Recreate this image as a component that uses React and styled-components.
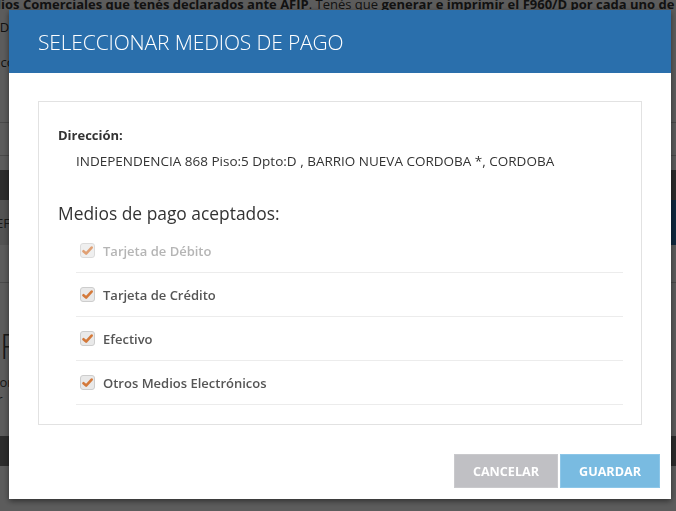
import React from "react";
import styled, { createGlobalStyle } from "styled-components";

const GlobalStyle = createGlobalStyle`
  html, body {
    margin: 0;
    padding: 0;
    background: #fff;
    font-family: "Open Sans", "Liberation Sans", sans-serif;
    color: #333;
    overflow: hidden;
  }
`;

const methods = [
  { id: "debito", label: "Tarjeta de Débito", disabled: true },
  { id: "credito", label: "Tarjeta de Crédito" },
  { id: "efectivo", label: "Efectivo" },
  { id: "otros", label: "Otros Medios Electrónicos" },
];

const Page = styled.div`
  width: 676px;
  height: 511px;
  overflow: hidden;
`;

const Intro = styled.p`
  margin: -7px 0 0 -48px;
  white-space: nowrap;
  font-size: 13px;
  line-height: 23px;
  color: #333;
  b {
    font-weight: 700;
  }
`;

const Note = styled.p`
  margin: 13px 0 0 -40px;
  font-size: 13px;
  line-height: 20px;
`;

const Rule = styled.div`
  margin-top: ${(p) => p.gap}px;
  border-top: 1px solid #ccc;
`;

const TableHead = styled.div`
  margin-top: 14px;
  height: 30px;
  background: #7a7a7a;
`;

const TableRow = styled.div`
  display: flex;
  height: 45px;
  align-items: center;
  background: #e6e6e6;
  font-size: 13px;
  color: #444;
  span {
    margin-left: -4px;
  }
  i {
    margin-left: auto;
    height: 100%;
    width: 12px;
    background: #2a6fac;
  }
`;

const BigTitle = styled.h2`
  margin: 41px 0 0 0;
  font-size: 34px;
  font-weight: 300;
  line-height: 44px;
  color: #444;
`;

const SmallText = styled.p`
  margin: 6px 0 0 -10px;
  font-size: 13px;
  line-height: 17px;
  color: #444;
`;

const FooterBar = styled.div`
  margin-top: 28px;
  height: 30px;
  background: #7a7a7a;
`;

const Overlay = styled.div`
  position: fixed;
  inset: 0;
  background: rgba(0, 0, 0, 0.64);
`;

const Modal = styled.div`
  position: fixed;
  top: 10px;
  left: 9px;
  width: 662px;
  height: 489px;
  background: #fff;
  box-shadow: 0 2px 6px rgba(0, 0, 0, 0.5);
  display: flex;
  flex-direction: column;
`;

const Header = styled.div`
  height: 63px;
  background: #2a6fac;
  display: flex;
  align-items: center;
  padding-left: 29px;
  color: #fff;
  font-size: 21px;
  font-weight: 300;
  letter-spacing: -0.15px;
`;

const Body = styled.div`
  padding: 28px 29px 0;
`;

const Panel = styled.div`
  border: 1px solid #e2e2e2;
  padding: 24px 18px 19px 19px;
`;

const Label = styled.div`
  font-size: 13px;
  line-height: 18px;
  font-weight: 700;
  color: #333;
`;

const Address = styled.div`
  margin-top: 8px;
  padding-left: 18px;
  font-size: 13.5px;
  line-height: 18px;
  font-weight: 500;
  color: #333;
`;

const Heading = styled.h3`
  margin: 31px 0 4px;
  font-size: 17.4px;
  line-height: 24px;
  font-weight: 500;
  color: #333;
`;

const List = styled.ul`
  list-style: none;
  margin: 0 0 0 18px;
  padding: 0;
`;

const Item = styled.li`
  height: 43px;
  display: flex;
  align-items: center;
  gap: 8px;
  padding-left: 4px;
  border-bottom: 1px solid #ececec;
  font-size: 13px;
  font-weight: 600;
  color: ${(p) => (p.disabled ? "#b5b5b5" : "#555")};
`;

const Box = styled.span`
  width: 13px;
  height: 13px;
  border-radius: 3px;
  border: 1px solid #cdcdcd;
  background: #e9e9e9;
  display: flex;
  align-items: center;
  justify-content: center;
  opacity: ${(p) => (p.disabled ? 0.7 : 1)};
`;

const Footer = styled.div`
  margin-top: auto;
  display: flex;
  justify-content: flex-end;
  gap: 2px;
  padding: 0 11px 11px;
`;

const Button = styled.button`
  height: 34px;
  padding: 0 18px;
  border: 1px solid ${(p) => (p.primary ? "#8cc6e8" : "#c9c9cc")};
  background: ${(p) => (p.primary ? "#79bbe1" : "#c0c0c4")};
  color: #fff;
  font-family: "Open Sans", "Liberation Sans", sans-serif;
  font-size: 12.6px;
  font-weight: 700;
  cursor: pointer;
`;

function Check() {
  return (
    <svg width="11" height="11" viewBox="0 0 12 12">
      <path
        d="M1.6 6.8 L4.5 9.3 L10.5 2.8"
        fill="none"
        stroke="#d4793a"
        strokeWidth="2.8"
        strokeLinecap="round"
        strokeLinejoin="round"
      />
    </svg>
  );
}

export default function App() {
  return (
    <>
      <GlobalStyle />
      <Page>
        <Intro>
          <b>Domicilios Comerciales que tenés declarados ante AFIP</b>. Tenés que{" "}
          <b>generar e imprimir el F960/D por cada uno de los domicilios</b>
          <br />
          el F960/D
        </Intro>
        <Note>Podés consultar los datos</Note>
        <Rule gap={50} />
        <Rule gap={32} />
        <TableHead />
        <TableRow>
          <span>EF</span>
          <i />
        </TableRow>
        <Rule gap={37} />
        <BigTitle>F</BigTitle>
        <SmallText>
          cion
          <br />
          ar
        </SmallText>
        <FooterBar />
      </Page>
      <Overlay />
      <Modal>
        <Header>SELECCIONAR MEDIOS DE PAGO</Header>
        <Body>
          <Panel>
            <Label>Dirección:</Label>
            <Address>
              INDEPENDENCIA 868 Piso:5 Dpto:D , BARRIO NUEVA CORDOBA *, CORDOBA
            </Address>
            <Heading>Medios de pago aceptados:</Heading>
            <List>
              {methods.map((m) => (
                <Item key={m.id} disabled={m.disabled}>
                  <Box disabled={m.disabled}>
                    <Check />
                  </Box>
                  {m.label}
                </Item>
              ))}
            </List>
          </Panel>
        </Body>
        <Footer>
          <Button>CANCELAR</Button>
          <Button primary>GUARDAR</Button>
        </Footer>
      </Modal>
    </>
  );
}
